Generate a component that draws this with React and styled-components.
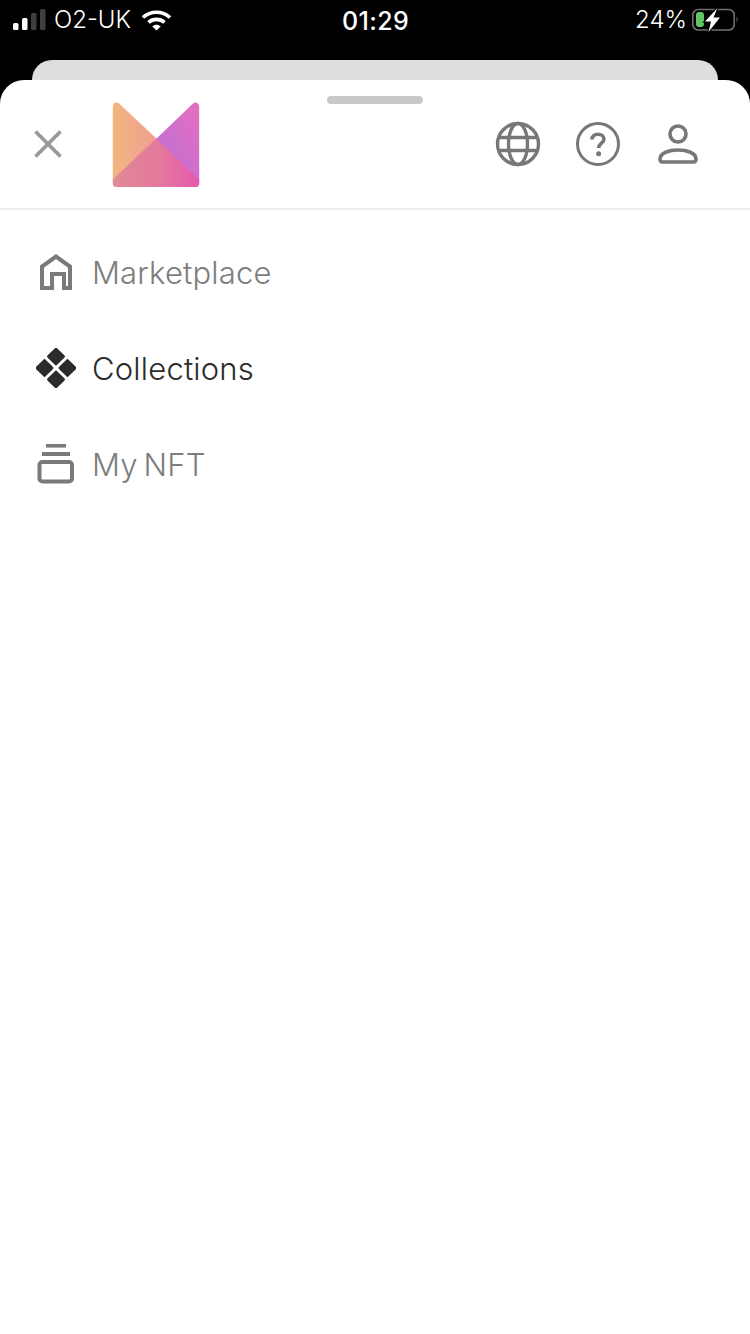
import React from "react";
import styled, { createGlobalStyle } from "styled-components";

const GlobalStyle = createGlobalStyle`
  html, body {
    margin: 0;
    padding: 0;
    background: #000;
  }
  body {
    font-family: "Inter", "Liberation Sans", sans-serif;
  }
`;

function SignalIcon() {
  return (
    <svg width="33" height="22" viewBox="0 0 33 22">
      <rect x="0" y="14" width="5.5" height="7" rx="1.5" fill="#fff" />
      <rect x="9" y="9" width="5.5" height="12" rx="1.5" fill="#fff" />
      <rect x="18" y="4" width="5.5" height="17" rx="1.5" fill="#3f3f3f" />
      <rect x="27" y="0" width="5.5" height="21" rx="1.5" fill="#3f3f3f" />
    </svg>
  );
}

function WifiIcon() {
  return (
    <svg width="30" height="22" viewBox="0 0 30 22" fill="none">
      <path d="M1 8.5C8.5 1.5 20.5 1.5 28 8.5" stroke="#fff" strokeWidth="3.6" />
      <path d="M6.5 13.4C11 9.4 18 9.4 22.5 13.4" stroke="#fff" strokeWidth="3.6" />
      <path d="M10.3 17.4C12.8 15.2 16.2 15.2 18.7 17.4L14.5 21.5Z" fill="#fff" />
    </svg>
  );
}

function BatteryIcon() {
  return (
    <svg width="48" height="24" viewBox="0 0 48 24" fill="none">
      <rect x="2.8" y="1.5" width="41.4" height="20.5" rx="5.5" stroke="#6f6f6f" strokeWidth="1.6" />
      <rect x="6" y="4" width="8" height="15" rx="3" fill="#62c466" />
      <path d="M46.6 8.5C47.4 9.4 47.6 10.4 47.6 11.5C47.6 12.6 47.4 13.6 46.6 14.5Z" fill="#6f6f6f" />
      <path d="M27.5 0L15 13.5H21L18.5 24L30 9.5H23.5Z" fill="#000" stroke="#000" strokeWidth="2.4" />
      <path d="M27.5 0L15 13.5H21L18.5 24L30 9.5H23.5Z" fill="#fff" />
    </svg>
  );
}

function CloseIcon() {
  return (
    <svg width="30" height="30" viewBox="0 0 30 30" fill="none">
      <path d="M2.5 2.5L27.5 27.5M27.5 2.5L2.5 27.5" stroke="#999" strokeWidth="3.8" />
    </svg>
  );
}

function LogoMark() {
  return (
    <svg width="88" height="86" viewBox="0 0 88 86">
      <defs>
        <linearGradient id="leftWing" x1="0" y1="0" x2="1" y2="0">
          <stop offset="0" stopColor="#f3b67f" />
          <stop offset="1" stopColor="#f09c92" />
        </linearGradient>
        <linearGradient id="rightWing" x1="0" y1="1" x2="1" y2="0">
          <stop offset="0" stopColor="#b86fdc" />
          <stop offset="1" stopColor="#e66fbe" />
        </linearGradient>
        <linearGradient id="floor" x1="0" y1="0" x2="1" y2="0">
          <stop offset="0" stopColor="#e08a96" />
          <stop offset="0.55" stopColor="#e3789c" />
          <stop offset="1" stopColor="#e758ae" />
        </linearGradient>
      </defs>
      <path d="M7 1.5L46 38V80H0.8V5C0.8 1 4.2 -0.6 7 1.5Z" fill="url(#leftWing)" />
      <path d="M81 1.5L43 38V80H87.2V5C87.2 1 83.8 -0.6 81 1.5Z" fill="url(#rightWing)" />
      <path d="M44 36.5L87.2 77.5V81.5C87.2 84 85.6 85 84 85H4C2.4 85 0.8 84 0.8 81.5V77.5Z" fill="url(#floor)" />
    </svg>
  );
}

function GlobeIcon() {
  return (
    <svg width="46" height="46" viewBox="0 0 46 46" fill="none" stroke="#777" strokeWidth="3.4">
      <circle cx="23" cy="23" r="20.5" />
      <ellipse cx="23" cy="23" rx="9.5" ry="20.5" />
      <path d="M4.5 16.5H41.5M4.5 29.5H41.5" />
    </svg>
  );
}

function HelpIcon() {
  return (
    <svg width="46" height="46" viewBox="0 0 46 46" fill="none">
      <circle cx="23" cy="23" r="20.5" stroke="#777" strokeWidth="3" />
      <path d="M17 18.5C17 15 19.6 13.2 23 13.2C26.4 13.2 29 15.2 29 18C29 22 23.6 22.2 23.6 27" stroke="#777" strokeWidth="3.6" />
      <circle cx="23.6" cy="32.8" r="2.5" fill="#777" />
    </svg>
  );
}

function PersonIcon() {
  return (
    <svg width="42" height="42" viewBox="0 0 42 42" fill="none" stroke="#777" strokeWidth="3.6">
      <circle cx="21" cy="11" r="8" />
      <path d="M3 36C3 30 12 27 21 27C30 27 39 30 39 36C39 38 38 39 36.5 39H5.5C4 39 3 38 3 36Z" />
    </svg>
  );
}

function HomeIcon() {
  return (
    <svg width="40" height="40" viewBox="0 0 40 40" fill="none">
      <path
        d="M6 36V14.5L20 4.5L34 14.5V36H28V22H16V36Z"
        stroke="#7a7a7a"
        strokeWidth="4"
      />
    </svg>
  );
}

function DiamondsIcon() {
  return (
    <svg width="40" height="40" viewBox="0 0 40 40" fill="#2b2b2d">
      <rect x="13.3" y="1.8" width="13.4" height="13.4" rx="1.6" transform="rotate(45 20 8.5)" />
      <rect x="1.8" y="13.3" width="13.4" height="13.4" rx="1.6" transform="rotate(45 8.5 20)" />
      <rect x="24.8" y="13.3" width="13.4" height="13.4" rx="1.6" transform="rotate(45 31.5 20)" />
      <rect x="13.3" y="24.8" width="13.4" height="13.4" rx="1.6" transform="rotate(45 20 31.5)" />
    </svg>
  );
}

function StackIcon() {
  return (
    <svg width="40" height="42" viewBox="0 0 40 42" fill="none">
      <rect x="10" y="1" width="20" height="3.6" fill="#7a7a7a" />
      <rect x="6" y="9" width="28" height="4" fill="#7a7a7a" />
      <rect x="3.5" y="19" width="32.5" height="19.5" rx="3" stroke="#7a7a7a" strokeWidth="4" />
    </svg>
  );
}

const navItems = [
  { label: "Marketplace", icon: <HomeIcon /> },
  { label: "Collections", icon: <DiamondsIcon />, active: true },
  { label: "My NFT", icon: <StackIcon /> },
];

export default function App() {
  return (
    <>
      <GlobalStyle />
      <Page>
        <StatusBar>
          <StatusLeft>
            <SignalIcon />
            <Carrier>O2-UK</Carrier>
            <WifiIcon />
          </StatusLeft>
          <Clock>01:29</Clock>
          <StatusRight>
            <Carrier>24%</Carrier>
            <BatteryIcon />
          </StatusRight>
        </StatusBar>
        <BackCard />
        <Sheet>
          <Handle />
          <Header>
            <HeaderLeft>
              <CloseIcon />
              <LogoSlot>
                <LogoMark />
              </LogoSlot>
            </HeaderLeft>
            <HeaderIcons>
              <GlobeIcon />
              <HelpIcon />
              <PersonSlot>
                <PersonIcon />
              </PersonSlot>
            </HeaderIcons>
          </Header>
          <Nav>
            {navItems.map((item) => (
              <NavRow key={item.label} $active={item.active}>
                <NavIcon>{item.icon}</NavIcon>
                {item.label}
              </NavRow>
            ))}
          </Nav>
        </Sheet>
      </Page>
    </>
  );
}

const Page = styled.div`
  width: 750px;
  height: 1334px;
  background: #000;
  display: flex;
  flex-direction: column;
  overflow: hidden;
`;

const StatusBar = styled.div`
  height: 60px;
  flex: none;
  display: grid;
  grid-template-columns: 1fr auto 1fr;
  align-items: start;
  padding: 8px 12px 0 13px;
  box-sizing: border-box;
  color: #fff;
  font-family: "Inter", "Liberation Sans", sans-serif;
  font-size: 24px;
`;

const StatusLeft = styled.div`
  display: flex;
  align-items: center;
  gap: 8px;
  height: 24px;
`;

const StatusRight = styled.div`
  display: flex;
  align-items: center;
  justify-content: flex-end;
  height: 24px;
`;

const Carrier = styled.span`
  font-weight: 300;
  line-height: 26px;
  margin-right: 3px;
`;

const Clock = styled.span`
  font-size: 25px;
  font-weight: 500;
  letter-spacing: 0.4px;
  line-height: 26px;
`;

const BackCard = styled.div`
  height: 20px;
  flex: none;
  margin: 0 32px;
  background: #dedede;
  border-radius: 20px 20px 0 0;
`;

const Sheet = styled.div`
  position: relative;
  flex: 1;
  background: #fff;
  border-radius: 24px 24px 0 0;
`;

const Handle = styled.div`
  position: absolute;
  top: 16px;
  left: 327px;
  width: 96px;
  height: 8px;
  border-radius: 4px;
  background: #c8c8c8;
`;

const Header = styled.div`
  height: 128px;
  display: flex;
  align-items: center;
  justify-content: space-between;
  padding: 0 51px 0 33px;
  box-shadow: 0 1px 0 #e8e8e8, 0 2px 1px #f1f1f1;
  border-radius: 24px 24px 0 0;
`;

const HeaderLeft = styled.div`
  display: flex;
  align-items: center;
  gap: 49px;
`;

const LogoSlot = styled.div`
  display: flex;
  margin-top: 2px;
`;

const HeaderIcons = styled.div`
  display: flex;
  align-items: center;
  gap: 34px;
`;

const PersonSlot = styled.div`
  display: flex;
  margin-left: 2px;
`;

const Nav = styled.nav`
  display: flex;
  flex-direction: column;
  padding: 16px 0 0 36px;
`;

const NavRow = styled.div`
  display: flex;
  align-items: center;
  gap: 16px;
  height: 96px;
  font-size: 31px;
  font-weight: 300;
  letter-spacing: 0.2px;
  word-spacing: -3px;
  color: ${(p) => (p.$active ? "#2b2b2d" : "#7d7d7d")};
`;

const NavIcon = styled.span`
  display: flex;
  width: 40px;
  justify-content: center;
`;
